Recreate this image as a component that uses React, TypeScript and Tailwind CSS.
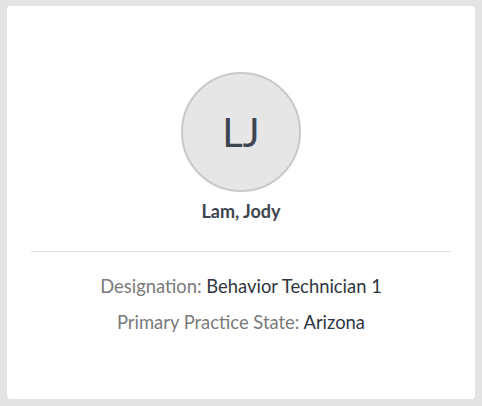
export default function App() {
  return (
    <div className="min-h-[406px] bg-[#e4e4e4] px-[7px] pt-[6px] pb-[7px]" style={{ fontFamily: "Lato, 'Open Sans', sans-serif" }}>
      <div className="flex h-[393px] flex-col items-center rounded-[4px] bg-white px-6 pt-[66px]">
        {/* avatar */}
        <div className="flex h-[120px] w-[120px] items-center justify-center rounded-full border-2 border-[#c9c9c9] bg-[#e6e6e6]">
          <span className="text-[40px] leading-none text-[#3d4550]">LJ</span>
        </div>
        <div className="mt-[7px] text-[18px] font-bold leading-6 text-[#3d4550]">Lam, Jody</div>
        <div className="mt-[28px] h-px w-full bg-[#e2e2e2]" />
        <div className="mt-[22px] flex flex-col items-center gap-[12px] text-[18.4px] leading-6">
          <div>
            <span className="text-[#7a7a7a]">Designation: </span>
            <span className="text-[#2f3640]">Behavior Technician 1</span>
          </div>
          <div>
            <span className="text-[#7a7a7a]">Primary Practice State: </span>
            <span className="text-[#2f3640]">Arizona</span>
          </div>
        </div>
      </div>
    </div>
  );
}
